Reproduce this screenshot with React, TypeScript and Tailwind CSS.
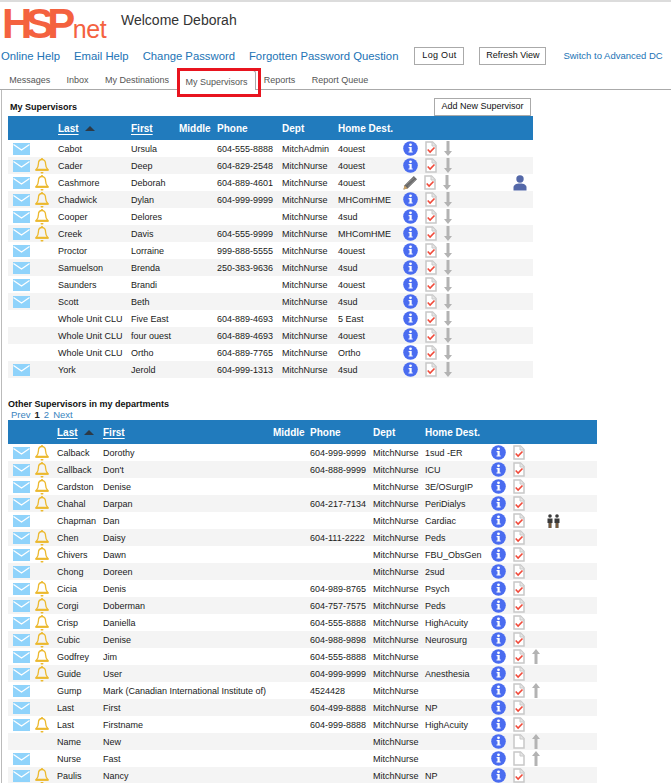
const font = "font-['Liberation_Sans',Arial,sans-serif]";

type Row = {
    last: string;
    first: string;
    phone?: string;
    dept?: string;
    home?: string;
    mail?: boolean;
    bell?: boolean;
    check?: boolean;
    arrow?: "down" | "up";
    pencil?: boolean;
    person?: boolean;
    couple?: boolean;
};

const mine: Row[] = [
    { last: "Cabot", first: "Ursula", phone: "604-555-8888", dept: "MitchAdmin", home: "4ouest", mail: true },
    { last: "Cader", first: "Deep", phone: "604-829-2548", home: "4ouest", mail: true, bell: true },
    { last: "Cashmore", first: "Deborah", phone: "604-889-4601", home: "4ouest", mail: true, bell: true, pencil: true, person: true },
    { last: "Chadwick", first: "Dylan", phone: "604-999-9999", home: "MHComHME", mail: true, bell: true },
    { last: "Cooper", first: "Delores", home: "4sud", mail: true, bell: true },
    { last: "Creek", first: "Davis", phone: "604-555-9999", home: "MHComHME", mail: true, bell: true },
    { last: "Proctor", first: "Lorraine", phone: "999-888-5555", home: "4ouest", mail: true },
    { last: "Samuelson", first: "Brenda", phone: "250-383-9636", home: "4sud", mail: true },
    { last: "Saunders", first: "Brandi", home: "4ouest", mail: true },
    { last: "Scott", first: "Beth", home: "4sud", mail: true },
    { last: "Whole Unit CLU", first: "Five East", phone: "604-889-4693", home: "5 East" },
    { last: "Whole Unit CLU", first: "four ouest", phone: "604-889-4693", home: "4ouest" },
    { last: "Whole Unit CLU", first: "Ortho", phone: "604-889-7765", home: "Ortho" },
    { last: "York", first: "Jerold", phone: "604-999-1313", home: "4sud", mail: true },
].map((r) => ({ check: true, arrow: "down" as const, ...r }));

const others: Row[] = [
    { last: "Calback", first: "Dorothy", phone: "604-999-9999", home: "1sud -ER", mail: true, bell: true },
    { last: "Callback", first: "Don't", phone: "604-888-9999", home: "ICU", mail: true, bell: true },
    { last: "Cardston", first: "Denise", home: "3E/OSurgIP", mail: true, bell: true },
    { last: "Chahal", first: "Darpan", phone: "604-217-7134", home: "PeriDialys", mail: true, bell: true },
    { last: "Chapman", first: "Dan", home: "Cardiac", mail: true, couple: true },
    { last: "Chen", first: "Daisy", phone: "604-111-2222", home: "Peds", mail: true, bell: true },
    { last: "Chivers", first: "Dawn", home: "FBU_ObsGen", mail: true, bell: true },
    { last: "Chong", first: "Doreen", home: "2sud", mail: true },
    { last: "Cicia", first: "Denis", phone: "604-989-8765", home: "Psych", mail: true, bell: true },
    { last: "Corgi", first: "Doberman", phone: "604-757-7575", home: "Peds", mail: true, bell: true },
    { last: "Crisp", first: "Daniella", phone: "604-555-8888", home: "HighAcuity", mail: true, bell: true },
    { last: "Cubic", first: "Denise", phone: "604-988-9898", home: "Neurosurg", mail: true, bell: true },
    { last: "Godfrey", first: "Jim", phone: "604-555-8888", mail: true, bell: true, arrow: "up" as const },
    { last: "Guide", first: "User", phone: "604-999-9999", home: "Anesthesia", mail: true, bell: true },
    { last: "Gump", first: "Mark (Canadian International Institute of)", phone: "4524428", mail: true, arrow: "up" as const },
    { last: "Last", first: "First", phone: "604-499-8888", home: "NP", mail: true },
    { last: "Last", first: "Firstname", phone: "604-999-8888", home: "HighAcuity", mail: true, bell: true },
    { last: "Name", first: "New", arrow: "up" as const, check: false },
    { last: "Nurse", first: "Fast", mail: true, arrow: "up" as const, check: false },
    { last: "Paulis", first: "Nancy", home: "NP", mail: true, bell: true },
].map((r) => ({ check: true, ...r }));

function Mail() {
    return (
        <svg width="17" height="12" viewBox="0 0 17 12" className="block">
            <rect width="17" height="12" fill="#8fd3fb" />
            <path d="M0.5 1.5 L8.5 7 L16.5 1.5" fill="none" stroke="#fff" strokeWidth="1.2" />
        </svg>
    );
}

function Bell() {
    return (
        <svg width="14" height="16" viewBox="0 0 14 16" className="block">
            <path d="M7 1.5c-2.6 0-3.6 2-3.6 4.4 0 2.6-.8 4-2.2 5.6h11.6c-1.4-1.6-2.2-3-2.2-5.6C10.600 3.500 9.600 1.500 7 1.500z" fill="none" stroke="#ecb92e" strokeWidth="1.300" />
            <rect x="0.500" y="11.500" width="13" height="1.400" fill="#ecb92e" />
            <rect x="5.500" y="14" width="3" height="1.500" rx="0.700" fill="#ecb92e" />
            <rect x="6.200" y="0" width="1.600" height="1.600" fill="#ecb92e" />
        </svg>
    );
}

function Info() {
    return (
        <svg width="15" height="15" viewBox="0 0 15 15" className="block shrink-0">
            <circle cx="7.500" cy="7.500" r="7.300" fill="#4a6cf0" />
            <circle cx="7.500" cy="3.800" r="1.400" fill="#fff" />
            <path d="M5.600 6h3.100v4.400h1v1.200H5.500v-1.200h1v-3.200h-.9z" fill="#fff" />
        </svg>
    );
}

function Doc({ check }: { check?: boolean }) {
    return (
        <svg width="12" height="15" viewBox="0 0 12 15" className="block shrink-0">
            <path d="M1 1h6.500L11 4.500V14H1z" fill="#fff" stroke="#c8c8c8" strokeWidth="1.500" />
            <path d="M7 1v4h4" fill="#e6e6e6" stroke="#c8c8c8" strokeWidth="1" />
            {check && <path d="M2.700 8.500l2.400 2.500 4.400-4.500" fill="none" stroke="#f04a3a" strokeWidth="1.600" />}
        </svg>
    );
}

function Arrow({ dir }: { dir: "up" | "down" }) {
    return (
        <svg width="8" height="15" viewBox="0 0 8 15" className="block shrink-0">
            {dir === "down" ? (
                <path d="M2.500 0h3v10H8l-4 5-4-5h2.500z" fill="#b3b3b3" />
            ) : (
                <path d="M2.500 15h3V5H8L4 0 0 5h2.500z" fill="#b3b3b3" />
            )}
        </svg>
    );
}

function Pencil() {
    return (
        <svg width="15" height="15" viewBox="0 0 15 15" className="block shrink-0">
            <path d="M0.500 14.500l1-4.200L10.800 1l3.200 3.200-9.300 9.300z" fill="#6a6a6a" />
            <path d="M0.500 14.500l1-4.200 3.200 3.200z" fill="#c9a26a" />
            <path d="M3 9.500l8.500-7M5 11.500l7.500-7" stroke="#9a9a9a" strokeWidth="0.700" />
        </svg>
    );
}

function Person() {
    return (
        <svg width="14" height="16" viewBox="0 0 14 16" className="block">
            <circle cx="7" cy="4" r="3.700" fill="#5468a8" />
            <path d="M0.500 15.500v-3c0-2.500 2.500-4 6.500-4s6.500 1.500 6.500 4v3z" fill="#5468a8" />
        </svg>
    );
}

function Couple() {
    return (
        <svg width="13" height="14" viewBox="0 0 13 14" className="block">
            <circle cx="3" cy="2" r="1.800" fill="#3a3a3a" />
            <circle cx="10" cy="2" r="1.800" fill="#3a3a3a" />
            <path d="M0.500 4.500h5v4.500H4.500v5h-3V9H0.500z" fill="#3a3a3a" />
            <path d="M7.500 4.500h5v4.500h-1v5h-3V9h-1z" fill="#3a3a3a" />
            <path d="M2.500 9h1v5h-1zM9.500 9h1v5h-1z" fill="#b87a3a" />
        </svg>
    );
}

function HeadLink({ children }: { children: string }) {
    return <span className="underline underline-offset-2 decoration-1">{children}</span>;
}

function SortUp() {
    return <span className="inline-block ml-[6px] mb-[2px] w-0 h-0 border-x-[5px] border-x-transparent border-b-[5px] border-b-[#2d3a46] align-middle" />;
}

function MyRows() {
    return (
        <table className="w-[525px] table-fixed text-[9px] text-[#1a1a1a]">
            <colgroup>
                <col className="w-[27px]" />
                <col className="w-[23px]" />
                <col className="w-[73px]" />
                <col className="w-[48px]" />
                <col className="w-[38px]" />
                <col className="w-[65px]" />
                <col className="w-[56px]" />
                <col className="w-[65px]" />
                <col />
            </colgroup>
            <thead>
                <tr className="h-[24px] bg-[#217bbd] text-white font-bold text-left text-[10px]">
                    <th />
                    <th />
                    <th className="font-bold pt-[1px]"><HeadLink>Last</HeadLink><SortUp /></th>
                    <th className="font-bold pt-[1px]"><HeadLink>First</HeadLink></th>
                    <th className="font-bold pt-[1px]">Middle</th>
                    <th className="font-bold pt-[1px]">Phone</th>
                    <th className="font-bold pt-[1px]">Dept</th>
                    <th className="font-bold pt-[1px]">Home Dest.</th>
                    <th />
                </tr>
            </thead>
            <tbody>
                {mine.map((r, i) => (
                    <tr key={i} className={i % 2 ? "h-[17px] bg-[#f4f4f4]" : "h-[17px] bg-white"}>
                        <td className="p-0 pl-[5px]">{r.mail && <Mail />}</td>
                        <td className="p-0">{r.bell && <Bell />}</td>
                        <td className="p-0 pt-[1px] leading-[14px] whitespace-nowrap">{r.last}</td>
                        <td className="p-0 pt-[1px] leading-[14px] whitespace-nowrap">{r.first}</td>
                        <td className="p-0" />
                        <td className="p-0 pt-[1px] leading-[14px] whitespace-nowrap">{r.phone}</td>
                        <td className="p-0 pt-[1px] leading-[14px] whitespace-nowrap">{r.dept ?? "MitchNurse"}</td>
                        <td className="p-0 pt-[1px] leading-[14px] whitespace-nowrap">{r.home}</td>
                        <td className="p-0">
                            <div className="flex items-center h-[17px]">
                                {r.pencil ? <Pencil /> : <Info />}
                                <span className={r.pencil ? "ml-[6px]" : "ml-[7px]"}><Doc check={r.check} /></span>
                                {r.arrow && <span className="ml-[7px]"><Arrow dir={r.arrow} /></span>}
                                {r.person && <span className="ml-[62px]"><Person /></span>}
                            </div>
                        </td>
                    </tr>
                ))}
            </tbody>
        </table>
    );
}

function OtherRows() {
    return (
        <table className="w-[589px] table-fixed text-[9px] text-[#1a1a1a]">
            <colgroup>
                <col className="w-[27px]" />
                <col className="w-[22px]" />
                <col className="w-[46px]" />
                <col className="w-[170px]" />
                <col className="w-[37px]" />
                <col className="w-[63px]" />
                <col className="w-[52px]" />
                <col className="w-[66px]" />
                <col />
            </colgroup>
            <thead>
                <tr className="h-[24px] bg-[#217bbd] text-white font-bold text-left text-[10px]">
                    <th />
                    <th />
                    <th className="font-bold pt-[1px]"><HeadLink>Last</HeadLink><SortUp /></th>
                    <th className="font-bold pt-[1px]"><HeadLink>First</HeadLink></th>
                    <th className="font-bold pt-[1px]">Middle</th>
                    <th className="font-bold pt-[1px]">Phone</th>
                    <th className="font-bold pt-[1px]">Dept</th>
                    <th className="font-bold pt-[1px]">Home Dest.</th>
                    <th />
                </tr>
            </thead>
            <tbody>
                {others.map((r, i) => (
                    <tr key={i} className={i % 2 ? "h-[17px] bg-[#f4f4f4]" : "h-[17px] bg-white"}>
                        <td className="p-0 pl-[5px]">{r.mail && <Mail />}</td>
                        <td className="p-0">{r.bell && <Bell />}</td>
                        <td className="p-0 pt-[1px] leading-[14px] whitespace-nowrap">{r.last}</td>
                        <td className="p-0 pt-[1px] leading-[14px] whitespace-nowrap">{r.first}</td>
                        <td className="p-0" />
                        <td className="p-0 pt-[1px] leading-[14px] whitespace-nowrap">{r.phone}</td>
                        <td className="p-0 pt-[1px] leading-[14px] whitespace-nowrap">MitchNurse</td>
                        <td className="p-0 pt-[1px] leading-[14px] whitespace-nowrap">{r.home}</td>
                        <td className="p-0">
                            <div className="flex items-center h-[17px]">
                                <Info />
                                <span className="ml-[7px]"><Doc check={r.check} /></span>
                                {r.arrow && <span className="ml-[7px]"><Arrow dir={r.arrow} /></span>}
                                {r.couple && <span className="ml-[22px]"><Couple /></span>}
                            </div>
                        </td>
                    </tr>
                ))}
            </tbody>
        </table>
    );
}

export default function App() {
    const tabs = ["Messages", "Inbox", "My Destinations", "My Supervisors", "Reports", "Report Queue"];

    return (
        <div className={`${font} relative w-[671px] h-[783px] overflow-hidden bg-white border-t-2 border-[#dcdcdc]`}>
            <div className="flex items-start h-[42px]">
                <div className="ml-[2px] mt-[1px] flex items-baseline text-[#f4623f] leading-none w-[119px]">
                    <span className="text-[42px] tracking-[-6.500px] font-bold">HSP</span>
                    <span className="text-[25px] ml-[4px] tracking-[-0.500px]">net</span>
                </div>
                <div className="mt-[8px] text-[14px] text-[#333]">Welcome Deborah</div>
            </div>

            <div className="flex items-center h-[24px] text-[11.300px] text-[#2273b5]">
                <span className="ml-[1px]">Online Help</span>
                <span className="ml-[14px]">Email Help</span>
                <span className="ml-[14px]">Change Password</span>
                <span className="ml-[14px]">Forgotten Password Question</span>
                <button className="ml-[16px] w-[50px] h-[18px] border border-[#aaa] text-[9px] tracking-[0.3px] text-[#111]">Log Out</button>
                <button className="ml-[15px] w-[67px] h-[18px] border border-[#aaa] text-[9px] text-[#111]">Refresh View</button>
                <span className="ml-[17px] text-[9.500px]">Switch to Advanced DC</span>
            </div>

            <div className="flex items-end h-[22px] pl-[1px] border-b border-[#aaa] text-[9px] text-[#555]">
                {tabs.map((t) => (
                    <div
                        key={t}
                        className={
                            t === "My Supervisors"
                                ? "h-[20px] px-[7.200px] leading-[22px] border border-b-0 border-[#aaa] rounded-t-[3px] bg-white -mb-[1px]"
                                : "h-[20px] px-[8.200px] leading-[22px]"
                        }
                    >
                        {t}
                    </div>
                ))}
            </div>

            <div className="absolute left-[177px] top-[66px] w-[84px] h-[29px] border-[3px] border-[#e8141f]" />

            <div className="border-l border-[#bbb] ml-[1px] pl-[6px]">
                <div className="flex items-end justify-between w-[525px] h-[26px]">
                    <div className="text-[9px] font-bold text-[#111] ml-[2px] mb-[2px]">My Supervisors</div>
                    <button className="w-[97px] h-[18px] border border-[#aaa] text-[9px] text-[#111] mr-[2px]">Add New Supervisor</button>
                </div>
                <MyRows />

                <div className="mt-[21px] text-[9px] font-bold text-[#111] leading-[10px]">Other Supervisors in my departments</div>
                <div className="text-[9.500px] leading-[11px] pl-[3px] h-[11px] text-[#3a84c0] flex gap-[4px]">
                    <span>Prev</span>
                    <span className="font-bold text-[#222]">1</span>
                    <span>2</span>
                    <span>Next</span>
                </div>
                <OtherRows />
            </div>
        </div>
    );
}
